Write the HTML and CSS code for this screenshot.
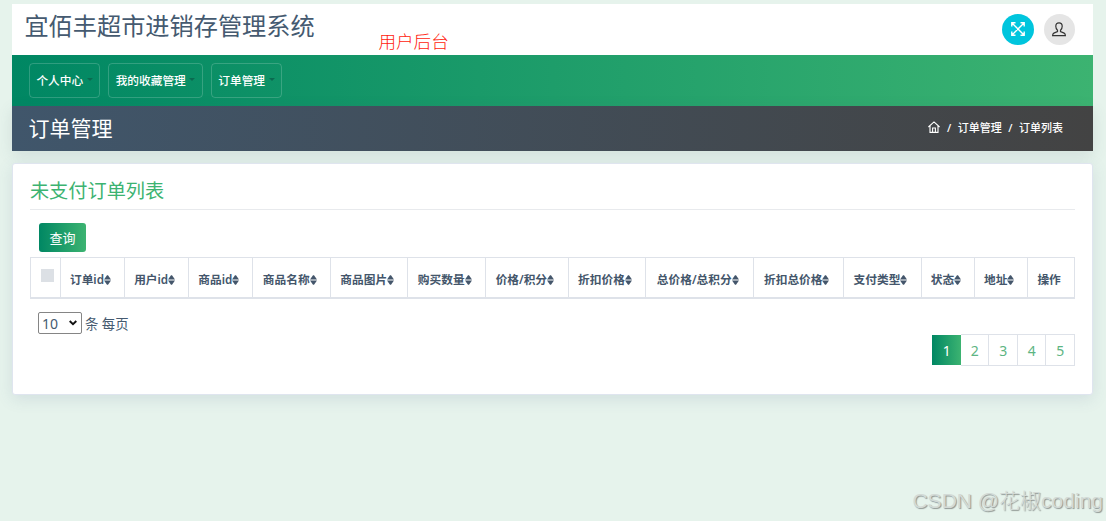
FILE: index.html
```html
<!DOCTYPE html>
<html lang="zh-CN">

<head>
    <meta charset="UTF-8">
    <meta name="viewport" content="width=device-width, initial-scale=1.0">
    <title>宜佰丰超市进销存管理系统</title>
    <link rel="stylesheet" href="styles.css">
</head>

<body>
    <svg class="sprite" width="0" height="0">
        <symbol id="sort" viewBox="0 0 7 10">
            <path d="M0 4.4L3 .2h1L7 4.4zM0 5.6h7L4 9.8H3z" fill="currentColor" />
        </symbol>
    </svg>
    <div class="wrapper">
        <header class="header">
            <h1 class="logo">宜佰丰超市进销存管理系统</h1>
            <span class="note">用户后台</span>
            <div class="header-tools">
                <a class="tool fullscreen">
                    <svg width="14" height="14" viewBox="0 0 14 14" fill="none" stroke="#fff" stroke-width="1.4">
                        <path d="M1 1l12 12M13 1L1 13M.8 4.5V.8h3.7M9.5.8h3.7v3.7M13.2 9.5v3.7H9.5M4.5 13.2H.8V9.5" />
                    </svg>
                </a>
                <a class="tool user">
                    <svg width="14" height="15" viewBox="0 0 14 15" fill="none" stroke="#333" stroke-width="1.2">
                        <path d="M5.5 8.3C4.4 7.3 3.8 5.8 3.8 4.2 3.8 2 5 .8 7 .8s3.2 1.2 3.2 3.4c0 1.6-.6 3.1-1.7 4.1v1.3l3.7 1.5c.9.4 1.2 1.2 1.2 2.6H.6c0-1.4.3-2.2 1.2-2.6l3.7-1.5z" />
                    </svg>
                </a>
            </div>
        </header>
        <nav class="navbar">
            <a class="nav-item">个人中心<i class="caret"></i></a>
            <a class="nav-item">我的收藏管理<i class="caret"></i></a>
            <a class="nav-item">订单管理<i class="caret"></i></a>
        </nav>
        <div class="page-title">
            <h2>订单管理</h2>
            <div class="breadcrumb">
                <svg width="12" height="12" viewBox="0 0 12 12" fill="none" stroke="#fff" stroke-width="1.1">
                    <path d="M.4 6L6 .9 11.6 6M2 5v6.4h8V5M4.6 11.3V7h2.8v4.3" />
                </svg>
                <span>/</span>
                <span>订单管理</span>
                <span>/</span>
                <span>订单列表</span>
            </div>
        </div>
        <div class="card">
            <h3>未支付订单列表</h3>
            <button class="btn">查询</button>
            <table class="orders">
                <colgroup>
                    <col class="w-check">
                    <col class="w-id" span="3">
                    <col class="w-four" span="3">
                    <col class="w-price">
                    <col class="w-four">
                    <col class="w-total">
                    <col class="w-five">
                    <col class="w-four">
                    <col class="w-two" span="2">
                    <col>
                </colgroup>
                <thead>
                    <tr>
                        <th class="check"><i class="box"></i></th>
                        <th>订单id<svg><use href="#sort" /></svg></th>
                        <th>用户id<svg><use href="#sort" /></svg></th>
                        <th>商品id<svg><use href="#sort" /></svg></th>
                        <th>商品名称<svg><use href="#sort" /></svg></th>
                        <th>商品图片<svg><use href="#sort" /></svg></th>
                        <th>购买数量<svg><use href="#sort" /></svg></th>
                        <th>价格/积分<svg><use href="#sort" /></svg></th>
                        <th>折扣价格<svg><use href="#sort" /></svg></th>
                        <th>总价格/总积分<svg><use href="#sort" /></svg></th>
                        <th>折扣总价格<svg><use href="#sort" /></svg></th>
                        <th>支付类型<svg><use href="#sort" /></svg></th>
                        <th>状态<svg><use href="#sort" /></svg></th>
                        <th>地址<svg><use href="#sort" /></svg></th>
                        <th>操作</th>
                    </tr>
                </thead>
            </table>
            <div class="page-size">
                <span class="select">10
                    <svg width="8" height="6" viewBox="0 0 8 6" fill="none" stroke="#111" stroke-width="1.9">
                        <path d="M.7 1L4 4.2 7.3 1" />
                    </svg>
                </span>
                条 每页
            </div>
            <div class="pagination">
                <a class="active">1</a>
                <a>2</a>
                <a>3</a>
                <a>4</a>
                <a>5</a>
            </div>
        </div>
    </div>
    <div class="watermark">CSDN @花椒coding</div>
</body>

</html>
```

FILE: styles.css
```css
* {
    box-sizing: border-box;
}

body {
    margin: 0;
    height: 521px;
    overflow: hidden;
    background: #e6f3ec;
    color: #455a70;
    font-family: "Noto Sans", "Noto Sans CJK SC", sans-serif;
    font-size: 13px;
}

h1,
h2,
h3 {
    margin: 0;
    font-weight: 400;
}

.sprite {
    position: absolute;
}

.wrapper {
    width: 1080.5px;
    margin: 4px 0 0 12.4px;
}

.header {
    display: flex;
    height: 51px;
    padding: 0 18px 0 12px;
    background: #fff;
}

.logo {
    width: 354px;
    font-size: 24.2px;
    line-height: 44px;
    color: #455a70;
}

.note {
    padding-top: 25px;
    font-size: 17.6px;
    font-weight: 300;
    line-height: 25px;
    color: #ff1a0c;
}

.header-tools {
    display: flex;
    align-items: center;
    gap: 10px;
    height: 50px;
    margin-left: auto;
}

.tool {
    display: flex;
    align-items: center;
    justify-content: center;
    width: 31px;
    height: 31px;
    border-radius: 50%;
    background: #e5e5e5;
}

.fullscreen {
    width: 32px;
    background: #00c5dd;
}

.navbar {
    display: flex;
    gap: 8px;
    height: 51px;
    padding: 8px 16.5px;
    background: linear-gradient(to right, #008763, #3cb371);
}

.nav-item {
    display: flex;
    align-items: center;
    height: 35px;
    padding: 0 6.5px 2px;
    border: 1px solid rgba(255, 255, 255, 0.18);
    border-radius: 4px;
    font-size: 11.7px;
    font-weight: 500;
    color: #fff;
}

.caret {
    margin-left: 3.5px;
    border: 3px solid transparent;
    border-top-color: #0a6a50;
    border-bottom: 0;
}

.page-title {
    display: flex;
    align-items: center;
    justify-content: space-between;
    height: 45px;
    padding: 0 30px 0 16px;
    background: linear-gradient(to right, #40566b, #434343);
    box-shadow: 0 4px 14px rgba(69, 90, 112, 0.13);
    color: #fff;
}

.page-title h2 {
    font-size: 21px;
    line-height: 44px;
    padding-bottom: 1px;
}

.breadcrumb {
    display: flex;
    align-items: center;
    gap: 6.5px;
    padding-bottom: 3px;
    font-size: 11px;
    font-weight: 500;
}

.card {
    height: 232px;
    margin-top: 12.4px;
    padding: 11px 17px 0 16.5px;
    border: 1px solid #dfe5ef;
    border-radius: 3px;
    background: #fff;
    box-shadow: 0 4px 16px rgba(69, 90, 140, 0.13);
}

.card h3 {
    height: 35px;
    border-bottom: 1px solid #e8eaed;
    font-size: 19.2px;
    line-height: 31px;
    color: #3cb371;
}

.btn {
    display: block;
    width: 47px;
    height: 29px;
    margin: 13px 0 5px 9px;
    padding: 0 0 1px;
    border: 0;
    border-radius: 3px;
    background: linear-gradient(to right, #008763, #3cb371);
    color: #fff;
    font-family: inherit;
    font-size: 13px;
}

.orders {
    width: 1045px;
    height: 42px;
    table-layout: fixed;
    border-collapse: collapse;
}

.orders th {
    padding: 2px 4px 0 0;
    border: 1px solid #dee2e9;
    border-bottom-width: 2px;
    font-size: 11.7px;
    font-weight: 600;
    white-space: nowrap;
    color: #44566b;
}

.orders svg {
    width: 7px;
    height: 10px;
    vertical-align: -1px;
}

.orders .check {
    padding: 0 0 4px 4px;
}

.box {
    display: block;
    width: 13px;
    height: 13px;
    margin: 0 auto;
    background: #dce0e5;
}

.w-check { width: 30px; }
.w-id { width: 64.2px; }
.w-four { width: 77.5px; }
.w-price { width: 82.8px; }
.w-total { width: 108px; }
.w-five { width: 90px; }
.w-two { width: 53.3px; }

.page-size {
    display: flex;
    align-items: center;
    gap: 3px;
    height: 22px;
    margin: 13px 0 0 8px;
    font-size: 13.4px;
}

.select {
    display: flex;
    align-items: center;
    justify-content: space-between;
    width: 44px;
    height: 22px;
    padding: 0 4px 0 3px;
    border: 1px solid #858585;
    border-radius: 2px;
    font-size: 14px;
}

.pagination {
    display: flex;
    justify-content: flex-end;
    height: 32px;
}

.pagination a {
    width: 28.5px;
    border: 1px solid #dee2e9;
    border-left: 0;
    font-size: 14px;
    line-height: 31px;
    text-align: center;
    color: #5db583;
}

.pagination .active {
    border: 1px solid #fff;
    border-width: 1px 0;
    background: linear-gradient(to right, #008763, #3cb371);
    color: #fff;
}

.watermark {
    position: absolute;
    right: 3px;
    bottom: 5px;
    font-family: "Liberation Sans", "Noto Sans CJK SC", sans-serif;
    font-size: 21px;
    font-weight: 300;
    line-height: 30px;
    color: #d3dad6;
    text-shadow: 1px 1px 1px #8f9693;
}
```
